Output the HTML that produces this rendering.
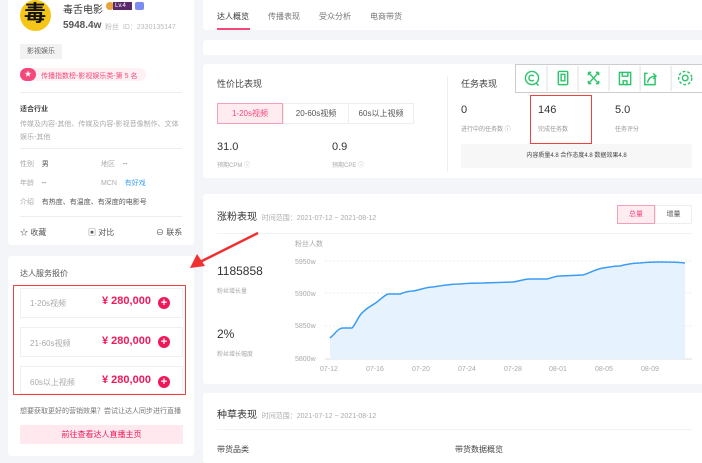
<!DOCTYPE html>
<html><head><meta charset="utf-8"><style>
*{margin:0;padding:0;box-sizing:border-box}
body{width:702px;height:451px;overflow:hidden;background:#f4f5f9;font-family:"Liberation Sans","Noto Sans CJK SC",sans-serif;color:#333;position:relative;font-size:8px}
.abs{position:absolute}
.card{position:absolute;background:#fff;border-radius:3px}
.g{color:#999}
.hr{position:absolute;height:1px;background:#eee}
</style></head><body>
<!-- left card 1 -->
<div class="card" style="left:8px;top:-4px;width:186px;height:249px"></div>
<div class="abs" style="left:20px;top:0;width:31px;height:31px;border-radius:50%;background:#f5c518;"></div>
<div class="abs" style="left:24px;top:0px;font-size:22px;font-weight:bold;color:#111;line-height:28px">毒</div>
<div class="abs" style="left:63px;top:1px;font-size:10px;color:#333">毒舌电影</div>
<div class="abs" style="left:106px;top:2px;width:8px;height:8px;border-radius:50%;background:#e8a33a"></div>
<div class="abs" style="left:113px;top:2px;width:19px;height:8px;background:#5a2a6c;color:#fff;font-size:6px;line-height:8px;padding-left:2px">Lv.4</div>
<div class="abs" style="left:135px;top:2px;width:9px;height:8px;background:#7c8cf5;border-radius:2px"></div>
<div class="abs" style="left:63px;top:20px;font-size:10px;font-weight:bold;color:#555">5948.4w</div>
<div class="abs g" style="left:105px;top:22px;font-size:7px;color:#bbb">粉丝&nbsp;&nbsp;ID：2330135147</div>
<div class="abs" style="left:20px;top:44px;width:42px;height:15px;background:#f2f2f2;font-size:7px;color:#666;line-height:15px;text-align:center">影视娱乐</div>
<div class="abs" style="left:20px;top:68px;width:126px;height:13px;background:#fff0f3;border-radius:7px"></div>
<div class="abs" style="left:20px;top:68px;width:16px;height:13px;background:#f5487a;border-radius:7px;color:#fff;font-size:7px;text-align:center;line-height:13px">★</div>
<div class="abs" style="left:41px;top:71px;font-size:7px;color:#f5487a">传播指数榜-影视娱乐类-第 5 名</div>
<div class="hr" style="left:20px;top:92px;width:162px"></div>
<div class="abs" style="left:20px;top:104px;font-size:7px;font-weight:bold;color:#444">适合行业</div>
<div class="abs g" style="left:20px;top:118px;width:165px;font-size:7px;line-height:13px;color:#aaa">传媒及内容-其他、传媒及内容-影视音像制作、文体娱乐-其他</div>
<div class="hr" style="left:20px;top:148px;width:162px"></div>
<div class="abs" style="left:20px;top:159px;font-size:7px;color:#aaa">性别&nbsp;&nbsp;&nbsp;&nbsp;<span style="color:#555">男</span></div>
<div class="abs" style="left:101px;top:159px;font-size:7px;color:#aaa">地区&nbsp;&nbsp;&nbsp;&nbsp;<span style="color:#555">--</span></div>
<div class="abs" style="left:20px;top:178px;font-size:7px;color:#aaa">年龄&nbsp;&nbsp;&nbsp;&nbsp;<span style="color:#555">--</span></div>
<div class="abs" style="left:101px;top:178px;font-size:7px;color:#aaa">MCN&nbsp;&nbsp;&nbsp;&nbsp;<span style="color:#3aa0f5">有好戏</span></div>
<div class="abs" style="left:20px;top:197px;font-size:7px;color:#aaa">介绍&nbsp;&nbsp;&nbsp;&nbsp;<span style="color:#555">有热度、有温度、有深度的电影号</span></div>
<div class="hr" style="left:20px;top:216px;width:162px"></div>
<div class="abs" style="left:20px;top:227px;font-size:8px;color:#555">☆ 收藏</div>
<div class="abs" style="left:88px;top:227px;font-size:8px;color:#555">▣ 对比</div>
<div class="abs" style="left:156px;top:227px;font-size:8px;color:#555">⊖ 联系</div>
<!-- left card 2 -->
<div class="card" style="left:8px;top:256px;width:186px;height:200px"></div>
<div class="abs" style="left:20px;top:268px;font-size:8px;color:#555">达人服务报价</div>
<div class="abs" style="left:13px;top:285px;width:173px;height:110px;border:1.5px solid #f04040"></div>
<div class="abs" style="left:20px;top:288px;width:163px;height:30px;border:1px solid #f0f0f0"></div>
<div class="abs" style="left:20px;top:327px;width:163px;height:30px;border:1px solid #f0f0f0"></div>
<div class="abs" style="left:20px;top:366px;width:163px;height:28px;border:1px solid #f0f0f0"></div>
<div class="abs" style="left:30px;top:298px;font-size:8px;color:#aaa">1-20s视频</div>
<div class="abs" style="left:30px;top:338px;font-size:8px;color:#aaa">21-60s视频</div>
<div class="abs" style="left:30px;top:377px;font-size:8px;color:#aaa">60s以上视频</div>
<div class="abs" style="left:102px;top:295px;font-size:11px;font-weight:bold;color:#f0185a">¥ 280,000</div>
<div class="abs" style="left:102px;top:335px;font-size:11px;font-weight:bold;color:#f0185a">¥ 280,000</div>
<div class="abs" style="left:102px;top:374px;font-size:11px;font-weight:bold;color:#f0185a">¥ 280,000</div>
<div class="abs" style="left:158px;top:297px;width:12px;height:12px;border-radius:50%;background:#f0185a;color:#fff;font-size:11px;font-weight:bold;line-height:12px;text-align:center">+</div>
<div class="abs" style="left:158px;top:336px;width:12px;height:12px;border-radius:50%;background:#f0185a;color:#fff;font-size:11px;font-weight:bold;line-height:12px;text-align:center">+</div>
<div class="abs" style="left:158px;top:376px;width:12px;height:12px;border-radius:50%;background:#f0185a;color:#fff;font-size:11px;font-weight:bold;line-height:12px;text-align:center">+</div>
<div class="abs" style="left:20px;top:406px;font-size:7px;color:#777">想要获取更好的营销效果？尝试让达人同步进行直播</div>
<div class="abs" style="left:20px;top:425px;width:163px;height:19px;background:#ffe8ee;color:#f0185a;font-size:8px;line-height:19px;text-align:center">前往查看达人直播主页</div>
<!-- right tabs -->
<div class="card" style="left:203px;top:-4px;width:510px;height:34px"></div>
<div class="abs" style="left:217px;top:11px;font-size:8px;color:#333">达人概览</div>
<div class="abs" style="left:217px;top:28px;width:33px;height:2px;background:#f5487a"></div>
<div class="abs" style="left:268px;top:11px;font-size:8px;color:#777">传播表现</div>
<div class="abs" style="left:319px;top:11px;font-size:8px;color:#777">受众分析</div>
<div class="abs" style="left:370px;top:11px;font-size:8px;color:#777">电商带货</div>
<div class="card" style="left:203px;top:40px;width:510px;height:15px"></div>
<div class="card" style="left:203px;top:64px;width:510px;height:114px"></div>
<div class="abs" style="left:217px;top:77px;font-size:9px;color:#444">性价比表现</div>
<div class="abs" style="left:217px;top:103px;width:66px;height:21px;border:1px solid #f5a0b8;background:#ffecf1;color:#f5487a;font-size:8px;line-height:19px;text-align:center">1-20s视频</div>
<div class="abs" style="left:283px;top:103px;width:66px;height:21px;border:1px solid #eee;color:#555;font-size:8px;line-height:19px;text-align:center">20-60s视频</div>
<div class="abs" style="left:348px;top:103px;width:66px;height:21px;border:1px solid #eee;color:#555;font-size:8px;line-height:19px;text-align:center">60s以上视频</div>
<div class="abs" style="left:217px;top:141px;font-size:11px;color:#333">31.0</div>
<div class="abs" style="left:217px;top:160px;font-size:6px;color:#aaa">预期CPM ⓘ</div>
<div class="abs" style="left:332px;top:141px;font-size:11px;color:#333">0.9</div>
<div class="abs" style="left:332px;top:160px;font-size:6px;color:#aaa">预期CPE ⓘ</div>
<div class="abs" style="left:447px;top:76px;width:1px;height:96px;background:#eee"></div>
<div class="abs" style="left:461px;top:77px;font-size:9px;color:#444">任务表现</div>
<div class="abs" style="left:461px;top:104px;font-size:11px;color:#333">0</div>
<div class="abs" style="left:461px;top:124px;font-size:6px;color:#999">进行中的任务数 ⓘ</div>
<div class="abs" style="left:538px;top:104px;font-size:11px;color:#333">146</div>
<div class="abs" style="left:538px;top:124px;font-size:6px;color:#999">完成任务数</div>
<div class="abs" style="left:615px;top:104px;font-size:11px;color:#333">5.0</div>
<div class="abs" style="left:615px;top:124px;font-size:6px;color:#999">任务评分</div>
<div class="abs" style="left:530px;top:95px;width:62px;height:49px;border:1.5px solid #f04040"></div>
<div class="abs" style="left:461px;top:144px;width:231px;height:24px;background:#f7f7f7;font-size:6px;color:#444;line-height:24px;text-align:center">内容质量4.8 合作态度4.8 数据效果4.8</div>
<!-- toolbar -->
<div class="abs" style="left:515px;top:64px;width:190px;height:29px;background:#fff;border:1px solid #ccc;display:flex">
<svg width="200" height="27" viewBox="0 0 200 27" fill="none" stroke="#2cc46a" stroke-width="1.5">
<circle cx="17" cy="13" r="7"/><path d="M21 18 L24 21 M19 11 A3 3 0 1 0 19 15"/>
<line x1="33" y1="0" x2="33" y2="27" stroke="#ddd" stroke-width="1"/>
<rect x="45" y="6" width="10" height="14" rx="1"/><path d="M48 9 h4 v7 h-4z"/>
<line x1="66" y1="0" x2="66" y2="27" stroke="#ddd" stroke-width="1"/>
<path d="M77 7 l11 12 M88 7 l-11 12 M77 7 h3 M77 7 v3 M88 7 h-3 M88 7 v3 M77 19 h3 M77 19 v-3 M88 19 h-3 M88 19 v-3"/>
<line x1="99" y1="0" x2="99" y2="27" stroke="#ddd" stroke-width="1"/>
<rect x="110" y="7" width="12" height="13"/><path d="M113 7 v4 h6 v-4 M114 20 v-4 h4 v4"/>
<line x1="132" y1="0" x2="132" y2="27" stroke="#ddd" stroke-width="1"/>
<path d="M148 13 v7 h-11 v-12 h3 M140 18 q1 -7 9 -7 M146 8 l3 3 -3 3"/>
<line x1="165" y1="0" x2="165" y2="27" stroke="#ddd" stroke-width="1"/>
<circle cx="180" cy="13" r="3"/><circle cx="180" cy="13" r="7" stroke-dasharray="3 2"/>
</svg></div>
<!-- chart card -->
<div class="card" style="left:203px;top:194px;width:510px;height:190px"></div>
<div class="abs" style="left:217px;top:208px;font-size:10px;color:#333">涨粉表现 <span style="font-size:7px;color:#aaa">&nbsp;时间范围：2021-07-12 ~ 2021-08-12</span></div>
<div class="abs" style="left:617px;top:205px;width:38px;height:19px;border:1px solid #f5a0b8;background:#ffecf1;color:#f5487a;font-size:7px;line-height:17px;text-align:center">总量</div>
<div class="abs" style="left:655px;top:205px;width:37px;height:19px;border:1px solid #eee;color:#555;font-size:7px;line-height:17px;text-align:center">增量</div>
<div class="hr" style="left:217px;top:233px;width:475px;background:#f3f3f3"></div>
<div class="abs" style="left:217px;top:264px;font-size:12px;color:#333">1185858</div>
<div class="abs" style="left:217px;top:286px;font-size:6px;color:#aaa">粉丝增长量</div>
<div class="abs" style="left:217px;top:327px;font-size:12px;color:#333">2%</div>
<div class="abs" style="left:217px;top:349px;font-size:6px;color:#aaa">粉丝增长幅度</div>
<svg class="abs" style="left:0;top:0" width="702" height="451">
<g font-size="7" fill="#aaa" font-family="Liberation Sans,sans-serif">
<text x="295" y="246">粉丝人数</text>
<text x="295" y="264">5950w</text><text x="295" y="296">5900w</text><text x="295" y="328">5850w</text><text x="295" y="361">5800w</text>
<text x="320" y="371">07-12</text><text x="366" y="371">07-16</text><text x="412" y="371">07-20</text><text x="458" y="371">07-24</text><text x="504" y="371">07-28</text><text x="549" y="371">08-01</text><text x="595" y="371">08-05</text><text x="641" y="371">08-09</text>
</g>
<g stroke="#eee" stroke-dasharray="2 2"><line x1="325" y1="261" x2="692" y2="261"/><line x1="325" y1="293" x2="692" y2="293"/><line x1="325" y1="326" x2="692" y2="326"/></g>
<line x1="325" y1="359" x2="692" y2="359" stroke="#ddd"/>
<path d="M330 338 C336 333 338 328 343 328 L352 328 C356 324 358 316 363 312 C368 307 373 305 377 302 C382 298 385 295 388 294 L400 294 C405 292 409 291 413 291 C420 290 426 287 433 287 C445 285 452 284 460 284 C470 283 475 283 483 283 L513 282 C520 281 524 279 530 279 L547 279 C552 278 555 276 560 276 L583 275 C590 273 596 269 603 268 C610 267 614 266 620 266 C628 264 633 263 640 263 C648 262 654 262 660 262 C670 262 677 262 685 263 L685 359 L330 359 Z" fill="#e6f3fe"/>
<path d="M330 338 C336 333 338 328 343 328 L352 328 C356 324 358 316 363 312 C368 307 373 305 377 302 C382 298 385 295 388 294 L400 294 C405 292 409 291 413 291 C420 290 426 287 433 287 C445 285 452 284 460 284 C470 283 475 283 483 283 L513 282 C520 281 524 279 530 279 L547 279 C552 278 555 276 560 276 L583 275 C590 273 596 269 603 268 C610 267 614 266 620 266 C628 264 633 263 640 263 C648 262 654 262 660 262 C670 262 677 262 685 263" stroke="#3a9cf5" stroke-width="1.5" fill="none"/>
<path d="M258 233 L200 262" stroke="#f03030" stroke-width="2.5"/>
<path d="M190 268 L197 254 L205 266 Z" fill="#f03030"/>
</svg>
<!-- bottom card -->
<div class="card" style="left:203px;top:393px;width:510px;height:70px"></div>
<div class="abs" style="left:217px;top:406px;font-size:10px;color:#333">种草表现 <span style="font-size:7px;color:#aaa">&nbsp;时间范围：2021-07-12 ~ 2021-08-12</span></div>
<div class="hr" style="left:217px;top:429px;width:475px;background:#f3f3f3"></div>
<div class="abs" style="left:217px;top:444px;font-size:8px;color:#444">带货品类</div>
<div class="abs" style="left:455px;top:444px;font-size:8px;color:#444">带货数据概览</div>
</body></html>
